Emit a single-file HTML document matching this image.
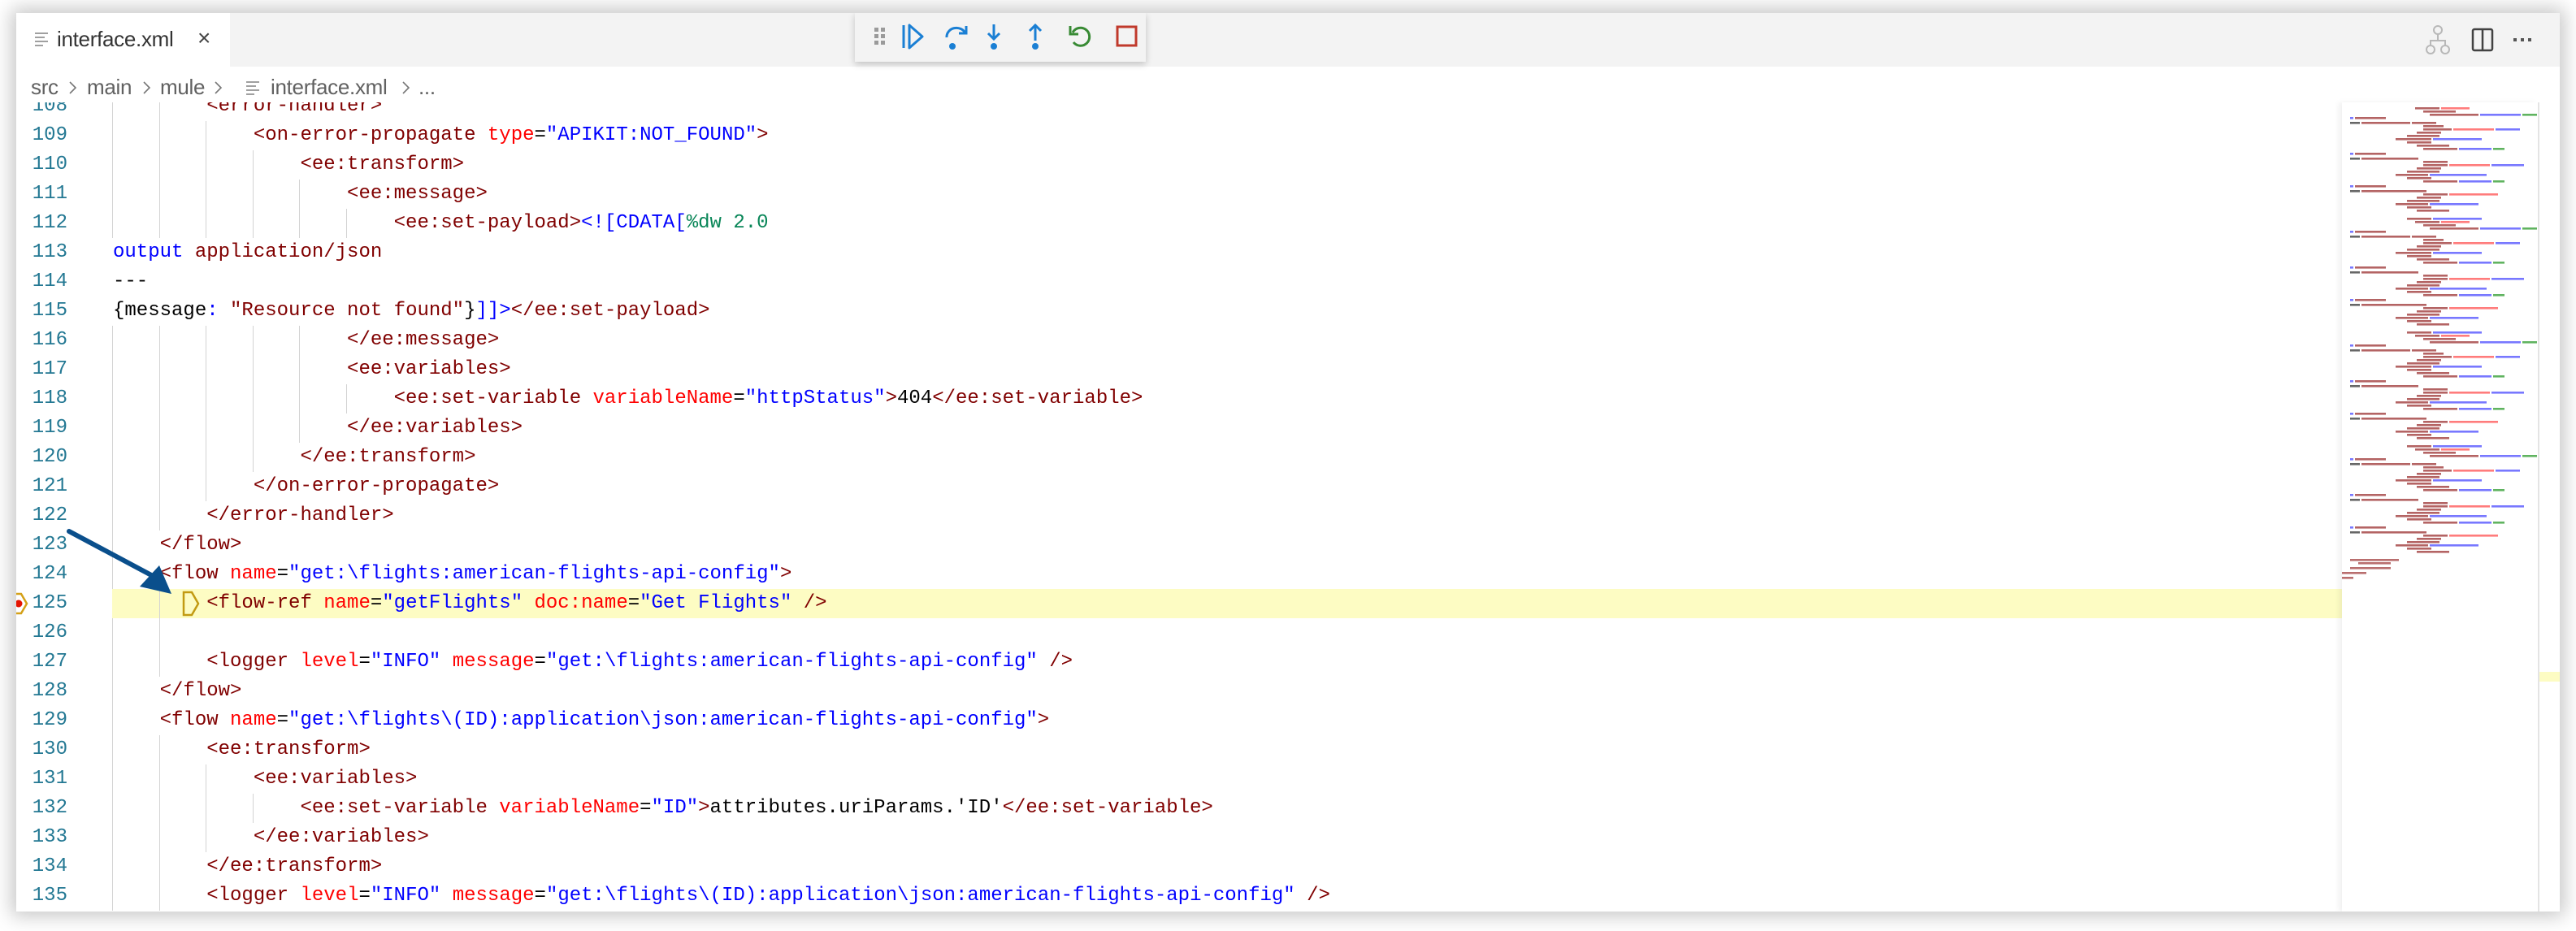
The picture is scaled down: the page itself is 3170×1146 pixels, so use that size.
<!DOCTYPE html>
<html><head><meta charset="utf-8">
<style>
*{margin:0;padding:0;box-sizing:border-box}
html,body{width:3170px;height:1146px;overflow:hidden;background:#fff}
#win{position:absolute;left:20px;top:16px;width:3130px;height:1106px;background:#fff;box-shadow:0 0 22px 6px rgba(0,0,0,.22);overflow:hidden}
#tabbar{position:absolute;left:0;top:0;width:100%;height:66px;background:#f3f3f3}
#tab{position:absolute;left:0;top:0;width:263px;height:66px;background:#fff;font:26px "Liberation Sans",sans-serif;color:#333}
#tab .t{position:absolute;left:50px;top:17px;letter-spacing:-0.3px}
#tab .x{position:absolute;left:223px;top:15px;font-size:28px;color:#444}
.fi{position:absolute;width:16px}
.fi i{display:block;height:2px;background:#a0a0a0;margin-bottom:3px}
.bc{position:absolute;top:75px;font:26px/32px "Liberation Sans",sans-serif;color:#616161;white-space:pre;letter-spacing:-0.3px}
#code{position:absolute;left:0;top:110px;width:2862px;height:996px;overflow:hidden}
.ln{position:absolute;left:0;height:36px;width:2862px;font:24px/36px "Liberation Mono",monospace;white-space:pre}
.ln .n{position:absolute;left:0;width:63px;text-align:right;color:#237893}
.ln .c{position:absolute;left:119px}
.g{position:absolute;top:0;width:1px;height:36px;background:#d3d3d3}
.tg{color:#800000}.at{color:#ff0000}.v{color:#0000ff}.k{color:#0000ff}.gr{color:#098658}.tx{color:#000}
#hl{position:absolute;left:118px;width:2744px;height:36px;background:#fdfcc3}
#mm{position:absolute;left:2862px;top:110px;width:241px;height:996px;box-shadow:-4px 0 6px rgba(0,0,0,.06)}
#sb{position:absolute;left:3103px;top:110px;width:27px;height:996px;border-left:2px solid #e4e4e4}
#dbg{position:absolute;left:1032px;top:0;width:358px;height:60px;background:#f3f3f3;box-shadow:0 3px 8px rgba(0,0,0,.2)}
</style></head><body>
<div id="win">
 <div id="tabbar">
  <div id="tab"><div class="fi" style="left:23px;top:24px"><i></i><i style="width:12px"></i><i></i><i style="width:10px"></i></div><span class="t">interface.xml</span><span class="x">×</span></div>
  <svg style="position:absolute;left:2960px;top:14px" width="140" height="40" viewBox="0 0 140 40">
   <g fill="none" stroke="#b8b8b8" stroke-width="2"><circle cx="20" cy="7" r="5"/><circle cx="11" cy="31" r="5"/><circle cx="29" cy="31" r="5"/><path d="M20 12v8M11 26v-6h18v6"/></g>
   <rect x="63" y="6" width="24" height="26" rx="2" fill="none" stroke="#424242" stroke-width="2.5"/><path d="M75 6v26" stroke="#424242" stroke-width="2.5"/>
   <g fill="#555"><rect x="113" y="17" width="4" height="4"/><rect x="122" y="17" width="4" height="4"/><rect x="131" y="17" width="4" height="4"/></g>
  </svg>
 </div>
 <span class="bc" style="left:18px">src</span>
 <span class="bc" style="left:87px">main</span>
 <span class="bc" style="left:177px">mule</span>
 <span class="bc" style="left:313px">interface.xml</span>
 <span class="bc" style="left:495px">...</span>
 <svg style="position:absolute;left:0;top:80px" width="500" height="24" viewBox="0 0 500 24">
  <g fill="none" stroke="#777" stroke-width="1.6"><path d="M66 5l7 7-7 7"/><path d="M157 5l7 7-7 7"/><path d="M245 5l7 7-7 7"/><path d="M476 5l7 7-7 7"/></g>
 </svg>
 <div class="fi" style="left:283px;top:84px"><i></i><i style="width:12px"></i><i></i><i style="width:10px"></i></div>

 <div id="code">
  <div id="hl" style="top:599px"></div>
  <div class="ln" style="top:-13px"><span class="n">108</span><i class="g" style="left:118px"></i><i class="g" style="left:176px"></i><span class="c">        <span class="tg">&lt;error-handler&gt;</span></span></div>
  <div class="ln" style="top:23px"><span class="n">109</span><i class="g" style="left:118px"></i><i class="g" style="left:176px"></i><i class="g" style="left:233px"></i><span class="c">            <span class="tg">&lt;on-error-propagate</span> <span class="at">type</span>=<span class="v">"APIKIT:NOT_FOUND"</span><span class="tg">&gt;</span></span></div>
  <div class="ln" style="top:59px"><span class="n">110</span><i class="g" style="left:118px"></i><i class="g" style="left:176px"></i><i class="g" style="left:233px"></i><i class="g" style="left:291px"></i><span class="c">                <span class="tg">&lt;ee:transform&gt;</span></span></div>
  <div class="ln" style="top:95px"><span class="n">111</span><i class="g" style="left:118px"></i><i class="g" style="left:176px"></i><i class="g" style="left:233px"></i><i class="g" style="left:291px"></i><i class="g" style="left:348px"></i><span class="c">                    <span class="tg">&lt;ee:message&gt;</span></span></div>
  <div class="ln" style="top:131px"><span class="n">112</span><i class="g" style="left:118px"></i><i class="g" style="left:176px"></i><i class="g" style="left:233px"></i><i class="g" style="left:291px"></i><i class="g" style="left:348px"></i><i class="g" style="left:406px"></i><span class="c">                        <span class="tg">&lt;ee:set-payload&gt;</span><span class="v">&lt;![CDATA[</span><span class="gr">%dw 2.0</span></span></div>
  <div class="ln" style="top:167px"><span class="n">113</span><span class="c"><span class="k">output</span> <span class="tg">application/json</span></span></div>
  <div class="ln" style="top:203px"><span class="n">114</span><span class="c"><span class="tx">---</span></span></div>
  <div class="ln" style="top:239px"><span class="n">115</span><span class="c"><span class="tx">{message</span><span class="v">:</span> <span class="tg">"Resource not found"</span><span class="tx">}</span><span class="v">]]&gt;</span><span class="tg">&lt;/ee:set-payload&gt;</span></span></div>
  <div class="ln" style="top:275px"><span class="n">116</span><i class="g" style="left:118px"></i><i class="g" style="left:176px"></i><i class="g" style="left:233px"></i><i class="g" style="left:291px"></i><i class="g" style="left:348px"></i><span class="c">                    <span class="tg">&lt;/ee:message&gt;</span></span></div>
  <div class="ln" style="top:311px"><span class="n">117</span><i class="g" style="left:118px"></i><i class="g" style="left:176px"></i><i class="g" style="left:233px"></i><i class="g" style="left:291px"></i><i class="g" style="left:348px"></i><span class="c">                    <span class="tg">&lt;ee:variables&gt;</span></span></div>
  <div class="ln" style="top:347px"><span class="n">118</span><i class="g" style="left:118px"></i><i class="g" style="left:176px"></i><i class="g" style="left:233px"></i><i class="g" style="left:291px"></i><i class="g" style="left:348px"></i><i class="g" style="left:406px"></i><span class="c">                        <span class="tg">&lt;ee:set-variable</span> <span class="at">variableName</span>=<span class="v">"httpStatus"</span><span class="tg">&gt;</span><span class="tx">404</span><span class="tg">&lt;/ee:set-variable&gt;</span></span></div>
  <div class="ln" style="top:383px"><span class="n">119</span><i class="g" style="left:118px"></i><i class="g" style="left:176px"></i><i class="g" style="left:233px"></i><i class="g" style="left:291px"></i><i class="g" style="left:348px"></i><span class="c">                    <span class="tg">&lt;/ee:variables&gt;</span></span></div>
  <div class="ln" style="top:419px"><span class="n">120</span><i class="g" style="left:118px"></i><i class="g" style="left:176px"></i><i class="g" style="left:233px"></i><i class="g" style="left:291px"></i><span class="c">                <span class="tg">&lt;/ee:transform&gt;</span></span></div>
  <div class="ln" style="top:455px"><span class="n">121</span><i class="g" style="left:118px"></i><i class="g" style="left:176px"></i><i class="g" style="left:233px"></i><span class="c">            <span class="tg">&lt;/on-error-propagate&gt;</span></span></div>
  <div class="ln" style="top:491px"><span class="n">122</span><i class="g" style="left:118px"></i><i class="g" style="left:176px"></i><span class="c">        <span class="tg">&lt;/error-handler&gt;</span></span></div>
  <div class="ln" style="top:527px"><span class="n">123</span><i class="g" style="left:118px"></i><span class="c">    <span class="tg">&lt;/flow&gt;</span></span></div>
  <div class="ln" style="top:563px"><span class="n">124</span><i class="g" style="left:118px"></i><span class="c">    <span class="tg">&lt;flow</span> <span class="at">name</span>=<span class="v">"get:\flights:american-flights-api-config"</span><span class="tg">&gt;</span></span></div>
  <div class="ln" style="top:599px"><span class="n">125</span><i class="g" style="left:176px"></i><span class="c">        <span class="tg">&lt;flow-ref</span> <span class="at">name</span>=<span class="v">"getFlights"</span> <span class="at">doc:name</span>=<span class="v">"Get Flights"</span> <span class="tg">/&gt;</span></span></div>
  <div class="ln" style="top:635px"><span class="n">126</span><i class="g" style="left:118px"></i><i class="g" style="left:176px"></i></div>
  <div class="ln" style="top:671px"><span class="n">127</span><i class="g" style="left:118px"></i><i class="g" style="left:176px"></i><span class="c">        <span class="tg">&lt;logger</span> <span class="at">level</span>=<span class="v">"INFO"</span> <span class="at">message</span>=<span class="v">"get:\flights:american-flights-api-config"</span> <span class="tg">/&gt;</span></span></div>
  <div class="ln" style="top:707px"><span class="n">128</span><i class="g" style="left:118px"></i><span class="c">    <span class="tg">&lt;/flow&gt;</span></span></div>
  <div class="ln" style="top:743px"><span class="n">129</span><i class="g" style="left:118px"></i><span class="c">    <span class="tg">&lt;flow</span> <span class="at">name</span>=<span class="v">"get:\flights\(ID):application\json:american-flights-api-config"</span><span class="tg">&gt;</span></span></div>
  <div class="ln" style="top:779px"><span class="n">130</span><i class="g" style="left:118px"></i><i class="g" style="left:176px"></i><span class="c">        <span class="tg">&lt;ee:transform&gt;</span></span></div>
  <div class="ln" style="top:815px"><span class="n">131</span><i class="g" style="left:118px"></i><i class="g" style="left:176px"></i><i class="g" style="left:233px"></i><span class="c">            <span class="tg">&lt;ee:variables&gt;</span></span></div>
  <div class="ln" style="top:851px"><span class="n">132</span><i class="g" style="left:118px"></i><i class="g" style="left:176px"></i><i class="g" style="left:233px"></i><i class="g" style="left:291px"></i><span class="c">                <span class="tg">&lt;ee:set-variable</span> <span class="at">variableName</span>=<span class="v">"ID"</span><span class="tg">&gt;</span><span class="tx">attributes.uriParams.'ID'</span><span class="tg">&lt;/ee:set-variable&gt;</span></span></div>
  <div class="ln" style="top:887px"><span class="n">133</span><i class="g" style="left:118px"></i><i class="g" style="left:176px"></i><i class="g" style="left:233px"></i><span class="c">            <span class="tg">&lt;/ee:variables&gt;</span></span></div>
  <div class="ln" style="top:923px"><span class="n">134</span><i class="g" style="left:118px"></i><i class="g" style="left:176px"></i><span class="c">        <span class="tg">&lt;/ee:transform&gt;</span></span></div>
  <div class="ln" style="top:959px"><span class="n">135</span><i class="g" style="left:118px"></i><i class="g" style="left:176px"></i><span class="c">        <span class="tg">&lt;logger</span> <span class="at">level</span>=<span class="v">"INFO"</span> <span class="at">message</span>=<span class="v">"get:\flights\(ID):application\json:american-flights-api-config"</span> <span class="tg">/&gt;</span></span></div>
  <svg style="position:absolute;left:0;top:599px" width="240" height="36" viewBox="0 0 240 36">
   <path d="M-6 6h12l7 12-7 12h-12" fill="none" stroke="#d4a017" stroke-width="2.5"/>
   <circle cx="3" cy="18" r="4.5" fill="#e51400"/>
   <path d="M206 4h10l8 14-8 14h-10z" fill="none" stroke="#c29a12" stroke-width="2.5"/>
  </svg>
 </div>

 <div id="mm">
  <svg width="241" height="620" viewBox="0 0 241 620">
   <defs>
    <pattern id="p" width="241" height="140" patternUnits="userSpaceOnUse">
     <g opacity=".75">
     <rect x="80" y="2" width="30" height="2.6" fill="#9b3030"/><rect x="112" y="2" width="60" height="2.6" fill="#4a4aff"/>
     <rect x="90" y="6" width="30" height="2.6" fill="#9b3030"/><rect x="122" y="6" width="35" height="2.6" fill="#ff5050"/>
     <rect x="100" y="10" width="40" height="2.6" fill="#9b3030"/>
     <rect x="108" y="14" width="60" height="2.6" fill="#9b3030"/><rect x="170" y="14" width="50" height="2.6" fill="#4a4aff"/><rect x="222" y="14" width="18" height="2.6" fill="#2a9a2a"/>
     <rect x="0" y="18" width="14" height="2.6" fill="#4a4aff"/><rect x="16" y="18" width="38" height="2.6" fill="#9b3030"/>
     <rect x="0" y="24" width="22" height="2.6" fill="#333"/><rect x="24" y="24" width="60" height="2.6" fill="#9b3030"/><rect x="86" y="24" width="30" height="2.6" fill="#9b3030"/>
     <rect x="100" y="28" width="25" height="2.6" fill="#9b3030"/>
     <rect x="100" y="32" width="35" height="2.6" fill="#9b3030"/><rect x="137" y="32" width="50" height="2.6" fill="#ff5050"/><rect x="189" y="32" width="30" height="2.6" fill="#4a4aff"/>
     <rect x="92" y="36" width="30" height="2.6" fill="#9b3030"/>
     <rect x="80" y="40" width="40" height="2.6" fill="#9b3030"/>
     <rect x="66" y="44" width="44" height="2.6" fill="#9b3030"/><rect x="112" y="44" width="60" height="2.6" fill="#4a4aff"/>
     <rect x="80" y="48" width="30" height="2.6" fill="#9b3030"/>
     <rect x="92" y="52" width="40" height="2.6" fill="#9b3030"/>
     <rect x="100" y="56" width="42" height="2.6" fill="#9b3030"/><rect x="144" y="56" width="40" height="2.6" fill="#4a4aff"/><rect x="186" y="56" width="14" height="2.6" fill="#2a9a2a"/>
     <rect x="0" y="62" width="14" height="2.6" fill="#4a4aff"/><rect x="16" y="62" width="38" height="2.6" fill="#9b3030"/>
     <rect x="0" y="68" width="22" height="2.6" fill="#333"/><rect x="24" y="68" width="70" height="2.6" fill="#9b3030"/>
     <rect x="100" y="72" width="30" height="2.6" fill="#9b3030"/>
     <rect x="100" y="76" width="30" height="2.6" fill="#9b3030"/><rect x="132" y="76" width="50" height="2.6" fill="#ff5050"/><rect x="184" y="76" width="40" height="2.6" fill="#4a4aff"/>
     <rect x="92" y="80" width="30" height="2.6" fill="#9b3030"/>
     <rect x="80" y="84" width="40" height="2.6" fill="#9b3030"/>
     <rect x="66" y="88" width="40" height="2.6" fill="#9b3030"/><rect x="108" y="88" width="70" height="2.6" fill="#4a4aff"/>
     <rect x="80" y="92" width="30" height="2.6" fill="#9b3030"/>
     <rect x="100" y="96" width="42" height="2.6" fill="#9b3030"/><rect x="144" y="96" width="40" height="2.6" fill="#4a4aff"/><rect x="186" y="96" width="14" height="2.6" fill="#2a9a2a"/>
     <rect x="0" y="102" width="14" height="2.6" fill="#4a4aff"/><rect x="16" y="102" width="38" height="2.6" fill="#9b3030"/>
     <rect x="0" y="108" width="22" height="2.6" fill="#333"/><rect x="24" y="108" width="80" height="2.6" fill="#9b3030"/>
     <rect x="100" y="112" width="30" height="2.6" fill="#9b3030"/><rect x="132" y="112" width="60" height="2.6" fill="#ff5050"/>
     <rect x="92" y="116" width="30" height="2.6" fill="#9b3030"/>
     <rect x="80" y="120" width="40" height="2.6" fill="#9b3030"/>
     <rect x="66" y="124" width="40" height="2.6" fill="#9b3030"/><rect x="108" y="124" width="60" height="2.6" fill="#4a4aff"/>
     <rect x="80" y="128" width="30" height="2.6" fill="#9b3030"/>
     <rect x="92" y="132" width="40" height="2.6" fill="#9b3030"/>
     </g>
    </pattern>
   </defs>
   <rect x="10" y="6" width="231" height="556" fill="url(#p)"/>
   <rect x="10" y="562" width="60" height="2.6" fill="#9b3030" opacity=".7"/>
   <rect x="20" y="566" width="40" height="2.6" fill="#9b3030" opacity=".7"/>
   <rect x="10" y="572" width="50" height="2.6" fill="#9b3030" opacity=".7"/>
   <rect x="0" y="578" width="30" height="2.6" fill="#9b3030" opacity=".7"/>
   <rect x="0" y="584" width="14" height="2.6" fill="#9b3030" opacity=".7"/>
  </svg>
 </div>
 <div id="sb"><div style="position:absolute;left:0;top:701px;width:25px;height:12px;background:#fdfcc3"></div></div>

 <div id="dbg">
  <svg width="358" height="60" viewBox="0 0 358 60">
   <g fill="#9a9a9a"><rect x="24" y="18" width="5" height="5"/><rect x="32" y="18" width="5" height="5"/><rect x="24" y="26" width="5" height="5"/><rect x="32" y="26" width="5" height="5"/><rect x="24" y="34" width="5" height="5"/><rect x="32" y="34" width="5" height="5"/></g>
   <g stroke="#1a7fd4" stroke-width="3" fill="none">
    <path d="M60 15v28"/><path d="M67 15v28l16-14z" stroke-linejoin="round"/>
    <path d="M113 30a12 11 0 0 1 23-5"/><path d="M128 25h9v-9"/>
    <path d="M171 14v18M164 25l7 7 7-7"/>
    <path d="M222 34v-19M215 22l7-7 7 7"/>
   </g>
   <g fill="#1a7fd4"><circle cx="120" cy="41" r="4"/><circle cx="171" cy="41" r="4"/><circle cx="222" cy="41" r="4"/></g>
   <path d="M268 24a11 11 0 1 1 1 12" stroke="#388a34" stroke-width="3" fill="none"/><path d="M265 16v10h10" stroke="#388a34" stroke-width="3" fill="none"/>
   <rect x="323" y="17" width="23" height="23" fill="none" stroke="#c0392b" stroke-width="3"/>
  </svg>
 </div>
</div>
<svg style="position:absolute;left:0;top:0" width="300" height="800" viewBox="0 0 300 800">
 <path d="M85 654L190 710" stroke="#0a4f8c" stroke-width="6" stroke-linecap="round"/>
 <path d="M211 731L172 722L196 696z" fill="#0a4f8c"/>
</svg>
</body></html>
